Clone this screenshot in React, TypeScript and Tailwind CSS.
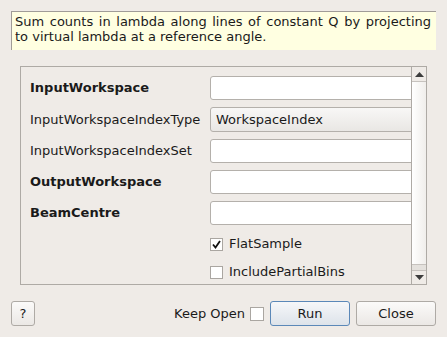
import { useState } from "react";

const font = { fontFamily: '"DejaVu Sans", sans-serif' };

function TextRow({ label, bold }: { label: string; bold?: boolean }) {
  return (
    <div className="flex items-center h-[24px]">
      <div className={`w-[180px] shrink-0 text-[13px] text-[#1a1a1a] ${bold ? "font-bold" : ""}`}>
        {label}
      </div>
      <div className="h-[24px] w-[230px] shrink-0 rounded-[3px] border border-[#b4b0ab] bg-white" />
    </div>
  );
}

function Check({ checked, label }: { checked: boolean; label: string }) {
  return (
    <div className="flex items-center h-[24px] pl-[180px]">
      <div className="w-[13px] h-[13px] border border-[#aaa6a1] bg-white flex items-center justify-center">
        {checked && (
          <svg width="9" height="9" viewBox="0 0 9 9">
            <path d="M1 4.5 L3.5 7.5 L8 1" stroke="#111" strokeWidth="1.8" fill="none" />
          </svg>
        )}
      </div>
      <span className="ml-[6px] text-[13px] text-[#1a1a1a]">{label}</span>
    </div>
  );
}

export default function App() {
  const [keepOpen, setKeepOpen] = useState(false);

  return (
    <div className="w-[447px] h-[337px] bg-[#efebe7] flex flex-col overflow-hidden" style={font}>
      {/* description */}
      <div className="mx-[11px] mt-[11px] h-[39px] border-t border-l border-[#a09c98] bg-[#ffffe1] pl-[3px] pr-[5px] pt-[2px] text-[13px] leading-[15px] text-[#1a1a1a] text-justify">
        Sum counts in lambda along lines of constant Q by projecting to virtual lambda at a reference angle.
      </div>

      {/* properties panel */}
      <div className="ml-[20px] mt-[16px] w-[407px] h-[219px] border border-[#aeaaa5] flex">
        <div className="flex-1 overflow-hidden pt-[9px] pl-[9px] flex flex-col gap-[7px]">
          <TextRow label="InputWorkspace" bold />
          <div className="flex items-center h-[25px]">
            <div className="w-[180px] shrink-0 text-[13px] text-[#1a1a1a]">InputWorkspaceIndexType</div>
            <div className="h-[25px] w-[230px] shrink-0 rounded-[3px] border border-[#b4b0ab] bg-gradient-to-b from-[#f8f7f6] to-[#e9e7e4] pl-[5px] flex items-center text-[13px] text-[#1a1a1a]">
              WorkspaceIndex
            </div>
          </div>
          <TextRow label="InputWorkspaceIndexSet" />
          <TextRow label="OutputWorkspace" bold />
          <TextRow label="BeamCentre" bold />
          <div className="flex flex-col gap-[4px]">
            <Check checked label="FlatSample" />
            <Check checked={false} label="IncludePartialBins" />
          </div>
        </div>
        {/* scrollbar */}
        <div className="w-[15px] border-l border-[#aeaaa5] flex flex-col bg-[#e4e1dd]">
          <div className="h-[15px] border-b border-[#c6c2be] bg-[#efebe7] flex items-center justify-center">
            <svg width="9" height="5" viewBox="0 0 9 5">
              <path d="M0 5 L4.5 0 L9 5 Z" fill="#3c3c3c" />
            </svg>
          </div>
          <div className="h-[183px] bg-gradient-to-r from-white to-[#f0eeeb] border-b border-[#c6c2be]" />
          <div className="flex-1" />
          <div className="h-[14px] border-t border-[#c6c2be] bg-[#efebe7] flex items-center justify-center">
            <svg width="9" height="5" viewBox="0 0 9 5">
              <path d="M0 0 L9 0 L4.5 5 Z" fill="#3c3c3c" />
            </svg>
          </div>
        </div>
      </div>

      {/* bottom buttons */}
      <div className="flex items-center mt-[16px] px-[11px] h-[25px]">
        <button className="w-[24px] h-[25px] rounded-[3px] border border-[#aeaaa5] bg-gradient-to-b from-[#fbfaf9] to-[#ebe8e5] text-[13px] text-[#1a1a1a]">
          ?
        </button>
        <div className="flex-1" />
        <span className="text-[13px] text-[#1a1a1a]">Keep Open</span>
        <button
          onClick={() => setKeepOpen(!keepOpen)}
          className="ml-[5px] w-[14px] h-[14px] border border-[#aaa6a1] bg-white"
        />
        <button className="ml-[6px] w-[80px] h-[25px] rounded-[3px] border border-[#5b88b8] bg-gradient-to-b from-[#f6f7f9] to-[#dde3ea] text-[13px] text-[#1a1a1a]">
          Run
        </button>
        <button className="ml-[6px] w-[80px] h-[25px] rounded-[3px] border border-[#aeaaa5] bg-gradient-to-b from-[#fbfaf9] to-[#ebe8e5] text-[13px] text-[#1a1a1a]">
          Close
        </button>
      </div>
    </div>
  );
}
